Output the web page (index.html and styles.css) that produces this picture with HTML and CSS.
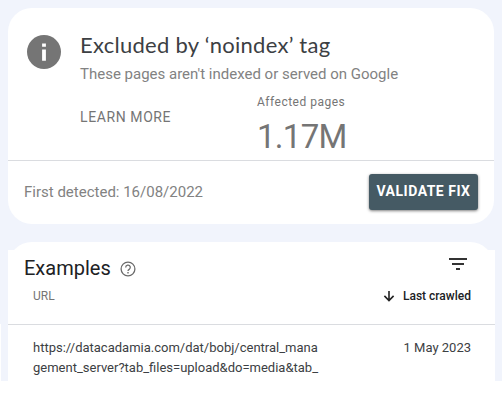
FILE: index.html
```
<!DOCTYPE html>
<html lang="en">
<head>
<meta charset="utf-8">
<title>Excluded by ‘noindex’ tag</title>
<link rel="stylesheet" href="styles.css">
</head>
<body>
<main class="page">
  <section class="card summary">
    <div class="summary-body">
      <svg class="info-icon" viewBox="0 0 34 34"><circle cx="17" cy="17" r="17" fill="#757575"/><path d="M15.1 8.5h3.8v3.3h-3.8zM15.1 14.5h3.8v11.2h-3.8z" fill="#fff"/></svg>
      <div class="summary-text">
        <h1 class="title">Excluded by ‘noindex’ tag</h1>
        <p class="subtitle">These pages aren't indexed or served on Google</p>
        <div class="details">
          <a class="learn">LEARN MORE</a>
          <div class="metric">
            <div class="metric-label">Affected pages</div>
            <div class="metric-value">1.17M</div>
          </div>
        </div>
      </div>
    </div>
    <footer class="summary-footer">
      <span class="detected">First detected: 16/08/2022</span>
      <button class="validate">VALIDATE FIX</button>
    </footer>
  </section>
  <section class="examples">
    <div class="cap"></div>
    <header class="examples-head">
      <h2 class="examples-title">Examples</h2>
      <svg class="help-icon" viewBox="0 0 16 16" fill="none" stroke="#6b6b6b"><circle cx="8" cy="8" r="6.9" stroke-width="1.3"/><path d="M5.7 6.5a2.3 2.3 0 1 1 3.5 1.9Q8 9.1 8 10.1" stroke-width="1.3"/><path d="M8 11v1.5" stroke-width="1.4"/></svg>
      <svg class="filter-icon" viewBox="0 0 18 12" fill="#333"><path d="M0 0h18v2H0zM3 5h12v2H3zM7 10h4v2H7z"/></svg>
    </header>
    <div class="columns">
      <span class="url-label">URL</span>
      <span class="sort"><svg class="arrow" viewBox="0 0 12 12" fill="none" stroke="#222" stroke-width="1.6"><path d="M6 1v9.3M1.4 5.9l4.6 4.6 4.6-4.6"/></svg>Last crawled</span>
    </div>
    <div class="row">
      <div class="url">https://datacadamia.com/dat/bobj/central_mana<br>gement_server?tab_files=upload&amp;do=media&amp;tab_</div>
      <span class="date">1 May 2023</span>
    </div>
  </section>
</main>
</body>
</html>
```
FILE: styles.css
```
* { box-sizing: border-box; }
body { margin: 0; width: 502px; height: 406px; overflow: hidden; background: #fff; font-family: Roboto, "Liberation Sans", sans-serif; }
h1, h2, p { margin: 0; font-weight: 400; }
svg { display: block; flex: none; }
.page { height: 381px; padding: 8px 7px 0 8px; background: linear-gradient(#fff, #fff) 0 324px / 1px 57px no-repeat #f1f4fc; white-space: nowrap; }
.card { height: 216px; margin-right: 1px; border-radius: 24px; background: #fff; }
.summary-body { display: flex; height: 152px; padding: 27px 0 0 19px; }
.info-icon { width: 34px; height: 34px; }
.summary-text { margin: -4px 0 0 19px; }
.title { font: 400 22px/28px "Lato", Roboto, sans-serif; color: #3c4043; letter-spacing: .27px; }
.subtitle { font-size: 15px; line-height: 20px; margin-top: 5px; color: #828282; }
.details { display: flex; width: 330px; }
.learn { width: 177px; padding-top: 23px; font-size: 14px; line-height: 20px; letter-spacing: .6px; color: #757575; }
.metric-label { margin-top: 10px; font-size: 12px; line-height: 16px; letter-spacing: .5px; color: #757575; }
.metric-value { margin-top: 7px; font-size: 33px; line-height: 40px; letter-spacing: -.7px; color: #757575; }
.summary-footer { display: flex; align-items: center; justify-content: space-between; height: 64px; padding: 0 16px; border-top: 1px solid #dadce0; }
.detected { margin-top: -2px; font-size: 15px; color: #828282; }
.validate { width: 109px; height: 36px; margin-top: -1px; padding: 0 0 2px; border: 0; border-radius: 3px; background: #455a64; color: #fff; font: 700 14px/34px Roboto, sans-serif; letter-spacing: .5px; box-shadow: 0 1px 3px rgba(0,0,0,.5); }
.examples { height: 139px; margin-top: 18px; padding-top: 8px; background: #fff content-box; }
.cap { height: 24px; margin: -8px 1px -16px 0; border-radius: 24px 24px 0 0; background: #fff; }
.examples-head { display: flex; align-items: center; height: 36px; padding: 0 16px; }
.examples-title { font-size: 20px; line-height: 28px; color: #202124; }
.help-icon { width: 16px; height: 16px; margin: 2px 0 0 9px; }
.filter-icon { width: 18px; height: 12px; margin: -9px 12px 0 auto; }
.columns { display: flex; justify-content: space-between; height: 39px; padding: 2px 24px 0 25px; font-size: 12px; line-height: 16px; border-bottom: 1px solid #dadce0; }
.url-label { color: #757575; }
.sort { display: flex; height: 16px; align-items: center; gap: 8px; color: #202124; font-weight: 500; }
.arrow { width: 12px; height: 12px; }
.row { display: flex; justify-content: space-between; padding: 13px 24px 0 25px; font-size: 13px; line-height: 20px; color: #3c4043; }
```
